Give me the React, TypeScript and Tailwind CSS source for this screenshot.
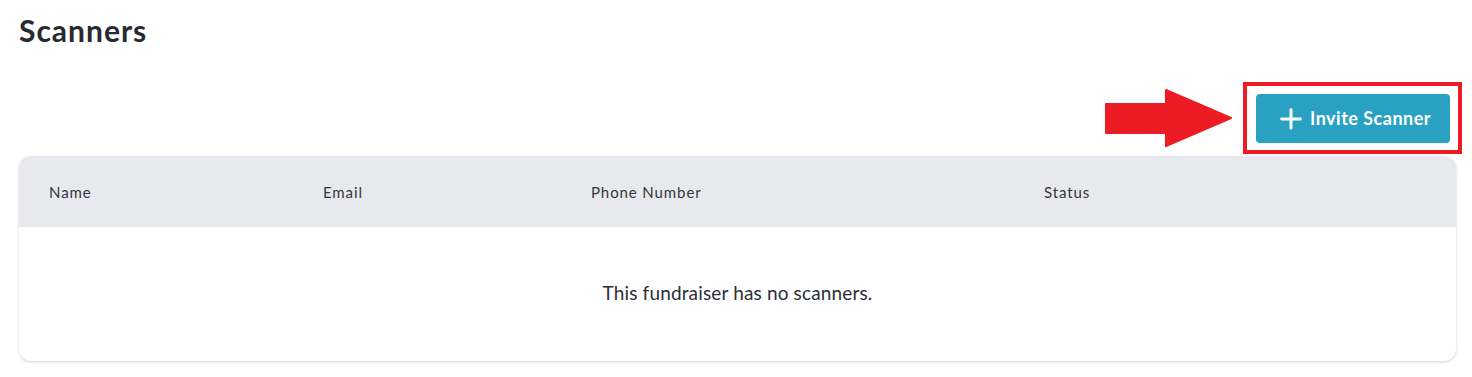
import { Plus } from "lucide-react";

const columns = [
  { label: "Name", width: "w-[274px]" },
  { label: "Email", width: "w-[268px]" },
  { label: "Phone Number", width: "w-[453px]" },
  { label: "Status", width: "flex-1" },
];

export default function App() {
  return (
    <div
      className="min-h-screen bg-white pl-[19px] pr-[16px] text-[#2b2e37]"
      style={{ fontFamily: "Lato, 'Noto Sans', sans-serif" }}
    >
      <h1 className="pt-[12px] text-[30px] font-bold leading-[36px] tracking-[1px] text-[#272a33]">Scanners</h1>

      {/* action row: the red arrow + box are annotations drawn on top of the screenshot */}
      <div className="mt-[34px] flex items-center justify-end">
        <svg width="127" height="58" viewBox="0 0 127 58" className="mr-[11px]">
          <path d="M1 15 H61 V1 L126 29 L61 57 V44 H1 Z" fill="#ed1c24" stroke="#ed1c24" strokeWidth="2" strokeLinejoin="round" />
        </svg>
        <div className="-mr-[6px] border-4 border-[#ed1c24] pb-[7px] pl-[9px] pr-[8px] pt-[8px]">
          <button className="flex h-[49px] w-[194px] items-center justify-center gap-[3px] rounded-[4px] bg-[#29a1c3] text-[18px] font-bold tracking-[0.5px] text-white">
            <Plus className="h-[32px] w-[32px]" strokeWidth={2.2} />
            <span>Invite Scanner</span>
          </button>
        </div>
      </div>

      <div className="mt-[2px] overflow-hidden rounded-[12px] bg-white shadow-[0_1px_3px_rgba(0,0,0,0.18)]">
        <div className="flex h-[71px] items-center bg-[#e8e9ee] pb-[-1px] pl-[30px] pt-[1px] text-[15px] tracking-[0.9px] text-[#33363e]">
          {columns.map((c) => (
            <div key={c.label} className={c.width}>
              {c.label}
            </div>
          ))}
        </div>
        <div className="flex h-[134px] items-center justify-center pb-[2px] text-[19px] tracking-[0.15px] text-[#2b2e37]">
          This fundraiser has no scanners.
        </div>
      </div>
    </div>
  );
}
